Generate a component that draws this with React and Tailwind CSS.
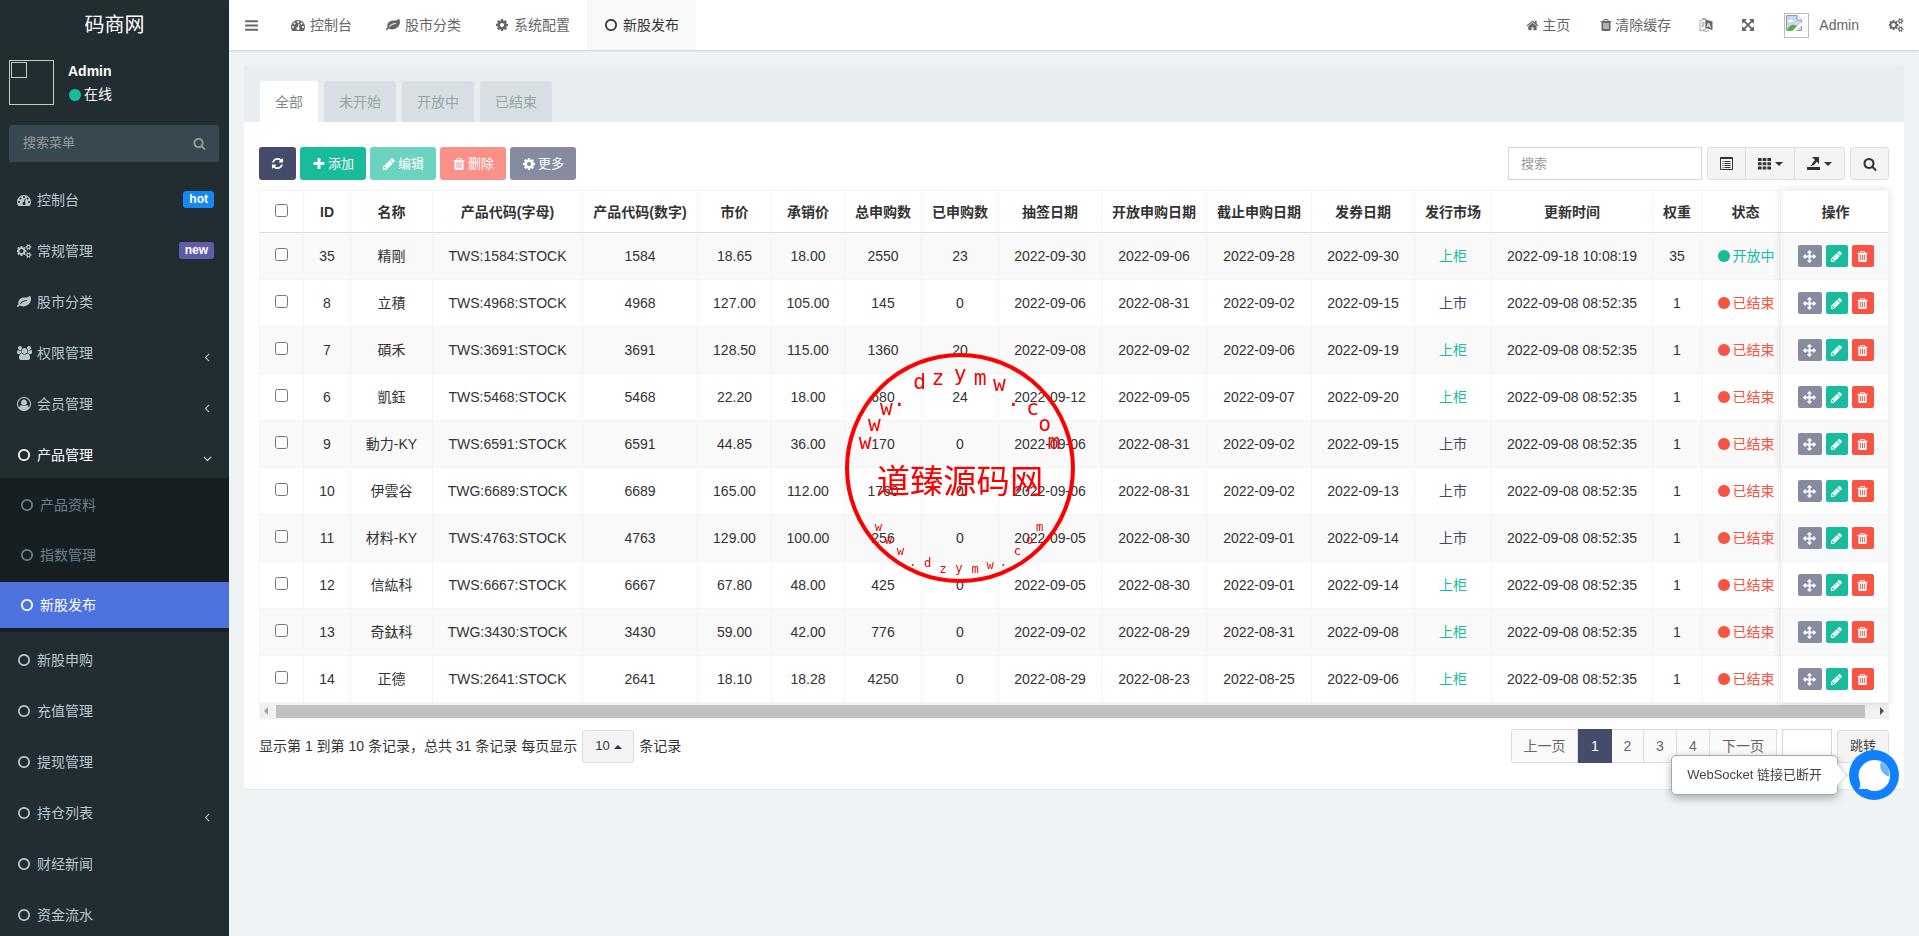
import clsx from 'clsx'

// [path, width], every glyph is 1792 units high
const ICONS = {
  dashboard: ['M384 1152q0-53-37.5-90.5t-90.5-37.5-90.5 37.5-37.5 90.5 37.5 90.5 90.5 37.5 90.5-37.5 37.5-90.5zm192-448q0-53-37.5-90.5t-90.5-37.5-90.5 37.5-37.5 90.5 37.5 90.5 90.5 37.5 90.5-37.5 37.5-90.5zm428 481l101-382q6-26-7.5-48.5t-38.5-29.5-48 6.5-30 39.5l-101 382q-60 5-107 43.5t-63 98.5q-20 77 20 146t117 89 146-20 89-117q16-60-6-117t-72-91zm660-33q0-53-37.5-90.5t-90.5-37.5-90.5 37.5-37.5 90.5 37.5 90.5 90.5 37.5 90.5-37.5 37.5-90.5zm-640-640q0-53-37.5-90.5t-90.5-37.5-90.5 37.5-37.5 90.5 37.5 90.5 90.5 37.5 90.5-37.5 37.5-90.5zm448 192q0-53-37.5-90.5t-90.5-37.5-90.5 37.5-37.5 90.5 37.5 90.5 90.5 37.5 90.5-37.5 37.5-90.5zm320 448q0 261-141 483-19 29-54 29h-1402q-35 0-54-29-141-221-141-483 0-182 71-348t191-286 286-191 348-71 348 71 286 191 191 286 71 348z', 1792],
  leaf: ['M1280 704q0-26-19-45t-45-19q-172 0-318 49.5t-259.5 134-235.5 219.5q-19 21-19 45 0 26 19 45t45 19q24 0 45-19 27-24 74-71t67-66q137-124 268.5-176t313.5-52q26 0 45-19t19-45zm512-198q0 95-20 193-46 224-184.5 383t-357.5 268q-214 108-438 108-148 0-286-47-15-5-88-42t-96-37q-16 0-39.5 32t-45 70-52.5 70-60 32q-43 0-63.5-17.5t-45.5-59.5q-2-4-6-11t-5.5-10-3-9.5-1.5-13.5q0-35 31-73.5t68-65.5 68-56 31-48q0-4-14-38t-16-44q-9-51-9-104 0-115 43.5-220t119-184.5 170.5-139 204-95.5q55-18 145-25.5t179.5-9 178.5-6 163.5-24 113.5-56.5l29.5-29.5 29.5-28 27-20 36.5-16 43.5-4.5q39 0 70.5 46t47.5 112 24 124 8 96z', 1792],
  cog: ['M1152 896q0-106-75-181t-181-75-181 75-75 181 75 181 181 75 181-75 75-181zm512-109v222q0 12-8 23t-20 13l-185 28q-19 54-39 91 35 50 107 138 10 12 10 25t-9 23q-27 37-99 108t-94 71q-12 0-26-9l-138-108q-44 23-91 38-16 136-29 186-7 28-36 28h-222q-14 0-24.5-8.5t-11.5-21.5l-28-184q-49-16-90-37l-141 107q-10 9-25 9-14 0-25-11-126-114-165-168-7-10-7-23 0-12 8-23 15-21 51-66.5t54-70.5q-27-50-41-99l-183-27q-13-2-21-12.5t-8-23.5v-222q0-12 8-23t19-13l186-28q14-46 39-92-40-57-107-138-10-12-10-24 0-10 9-23 26-36 98.5-107.5t94.5-71.5q13 0 26 10l138 107q44-23 91-38 16-136 29-186 7-28 36-28h222q14 0 24.5 8.5t11.5 21.5l28 184q49 16 90 37l142-107q9-9 24-9 13 0 25 10 129 119 165 170 7 8 7 22 0 12-8 23-15 21-51 66.5t-54 70.5q26 50 41 98l183 28q13 2 21 12.5t8 23.5z', 1792],
  cogs: ['M832 896q0-106-75-181t-181-75-181 75-75 181 75 181 181 75 181-75 75-181zm768 512q0-52-38-90t-90-38-90 38-38 90q0 53 37.5 90.5t90.5 37.5 90.5-37.5 37.5-90.5zm0-1024q0-52-38-90t-90-38-90 38-38 90q0 53 37.5 90.5t90.5 37.5 90.5-37.5 37.5-90.5zm-384 421v185q0 10-7 19.5t-16 10.5l-155 24q-11 35-32 76 34 48 90 115 7 11 7 20 0 12-7 19-23 30-82.5 89.5t-78.5 59.5q-11 0-21-7l-115-90q-37 19-77 31-11 108-23 155-7 24-30 24h-186q-11 0-20-7.5t-10-17.5l-23-153q-34-10-75-31l-118 89q-7 7-20 7-11 0-21-8-144-133-144-160 0-9 7-19 10-14 41-53t47-61q-23-44-35-82l-152-24q-10-1-17-9.5t-7-19.5v-185q0-10 7-19.5t16-10.5l155-24q11-35 32-76-34-48-90-115-7-11-7-20 0-12 7-20 22-30 82-89t79-59q11 0 21 7l115 90q34-18 77-32 11-108 23-154 7-24 30-24h186q11 0 20 7.5t10 17.5l23 153q34 10 75 31l118-89q8-7 20-7 11 0 21 8 144 133 144 160 0 8-7 19-12 16-42 54t-45 60q23 48 34 82l152 23q10 2 17 10.5t7 19.5zm640 533v140q0 16-149 31-12 27-30 52 51 113 51 138 0 4-4 7-122 71-124 71-8 0-46-47t-52-68q-20 2-30 2t-30-2q-14 21-52 68t-46 47q-2 0-124-71-4-3-4-7 0-25 51-138-18-25-30-52-149-15-149-31v-140q0-16 149-31 13-29 30-52-51-113-51-138 0-4 4-7 4-2 35-20t59-34 30-16q8 0 46 46.5t52 67.5q20-2 30-2t30 2q51-71 92-112l6-2q4 0 124 70 4 3 4 7 0 25-51 138 17 23 30 52 149 15 149 31zm0-1024v140q0 16-149 31-12 27-30 52 51 113 51 138 0 4-4 7-122 71-124 71-8 0-46-47t-52-68q-20 2-30 2t-30-2q-14 21-52 68t-46 47q-2 0-124-71-4-3-4-7 0-25 51-138-18-25-30-52-149-15-149-31v-140q0-16 149-31 13-29 30-52-51-113-51-138 0-4 4-7 4-2 35-20t59-34 30-16q8 0 46 46.5t52 67.5q20-2 30-2t30 2q51-71 92-112l6-2q4 0 124 70 4 3 4 7 0 25-51 138 17 23 30 52 149 15 149 31z', 1920],
  group: ['M593 896q-162 5-265 128h-134q-82 0-138-40.5t-56-118.5q0-353 124-353 6 0 43.5 21t97.5 42.5 119 21.5q67 0 133-23-5 37-5 66 0 159 97 282zm1071 637q0 120-73 189.5t-194 69.5h-874q-121 0-194-69.5t-73-189.5q0-53 3.5-103.5t14-109 26.5-108.5 43-97.5 62-81 85.5-53.5 111.5-20q10 0 43 21.5t73 48 107 48 135 21.5 135-21.5 107-48 73-48 43-21.5q61 0 111.5 20t85.5 53.5 62 81 43 97.5 26.5 108.5 14 109 3.5 103.5zm-1024-1277q0 106-75 181t-181 75-181-75-75-181 75-181 181-75 181 75 75 181zm704 384q0 159-112.5 271.5t-271.5 112.5-271.5-112.5-112.5-271.5 112.5-271.5 271.5-112.5 271.5 112.5 112.5 271.5zm576 225q0 78-56 118.5t-138 40.5h-134q-103-123-265-128 97-123 97-282 0-29-5-66 66 23 133 23 59 0 119-21.5t97.5-42.5 43.5-21q124 0 124 353zm-128-609q0 106-75 181t-181 75-181-75-75-181 75-181 181-75 181 75 75 181z', 1920],
  user: ['M896 0q182 0 348 71t286 191 191 286 71 348q0 181-70.5 347t-190.5 286-286 191.5-349 71.5-349-71-285.5-191.5-190.5-286-71-347.5 71-348 191-286 286-191 348-71zm619 1351q149-205 149-455 0-156-61-298t-164-245-245-164-298-61-298 61-245 164-164 245-61 298q0 250 149 455 66-327 306-327 131 128 313 128t313-128q240 0 306 327zm-235-647q0-159-112.5-271.5t-271.5-112.5-271.5 112.5-112.5 271.5 112.5 271.5 271.5 112.5 271.5-112.5 112.5-271.5z', 1792],
  circleO: ['M896 352q-148 0-273 73t-198 198-73 273 73 273 198 198 273 73 273-73 198-198 73-273-73-273-198-198-273-73zm768 544q0 209-103 385.5t-279.5 279.5-385.5 103-385.5-103-279.5-279.5-103-385.5 103-385.5 279.5-279.5 385.5-103 385.5 103 279.5 279.5 103 385.5z', 1792],
  circle: ['M1664 896q0 209-103 385.5t-279.5 279.5-385.5 103-385.5-103-279.5-279.5-103-385.5 103-385.5 279.5-279.5 385.5-103 385.5 103 279.5 279.5 103 385.5z', 1792],
  search: ['M1216 832q0-185-131.5-316.5t-316.5-131.5-316.5 131.5-131.5 316.5 131.5 316.5 316.5 131.5 316.5-131.5 131.5-316.5zm512 832q0 52-38 90t-90 38q-54 0-90-38l-343-342q-179 124-399 124-143 0-273.5-55.5t-225-150-150-225-55.5-273.5 55.5-273.5 150-225 225-150 273.5-55.5 273.5 55.5 225 150 150 225 55.5 273.5q0 220-124 399l343 343q37 37 37 90z', 1792],
  refresh: ['M1639 1056q0 5-1 7-64 268-268 434.5t-478 166.5q-146 0-282.5-55t-243.5-157l-129 129q-19 19-45 19t-45-19-19-45v-448q0-26 19-45t45-19h448q26 0 45 19t19 45-19 45l-137 137q71 66 161 102t187 36q134 0 250-65t186-179q11-17 53-117 8-23 30-23h192q13 0 22.5 9.5t9.5 22.5zm25-800v448q0 26-19 45t-45 19h-448q-26 0-45-19t-19-45 19-45l138-138q-148-137-349-137-134 0-250 65t-186 179q-11 17-53 117-8 23-30 23h-199q-13 0-22.5-9.5t-9.5-22.5v-7q65-268 270-434.5t480-166.5q146 0 284 55.5t245 156.5l130-129q19-19 45-19t45 19 19 45z', 1792],
  plus: ['M1600 736v192q0 40-28 68t-68 28h-416v416q0 40-28 68t-68 28h-192q-40 0-68-28t-28-68v-416h-416q-40 0-68-28t-28-68v-192q0-40 28-68t68-28h416v-416q0-40 28-68t68-28h192q40 0 68 28t28 68v416h416q40 0 68 28t28 68z', 1792],
  pencil: ['M491 1536l91-91-235-235-91 91v107h128v128h107zm523-928q0-22-22-22-10 0-17 7l-542 542q-7 7-7 17 0 22 22 22 10 0 17-7l542-542q7-7 7-17zm-54-192l416 416-832 832h-416v-416zm683 96q0 53-37 90l-166 166-416-416 166-165q36-38 90-38 53 0 91 38l235 234q37 39 37 91z', 1792],
  trash: ['M704 1376v-704q0-14-9-23t-23-9h-64q-14 0-23 9t-9 23v704q0 14 9 23t23 9h64q14 0 23-9t9-23zm256 0v-704q0-14-9-23t-23-9h-64q-14 0-23 9t-9 23v704q0 14 9 23t23 9h64q14 0 23-9t9-23zm256 0v-704q0-14-9-23t-23-9h-64q-14 0-23 9t-9 23v704q0 14 9 23t23 9h64q14 0 23-9t9-23zm-544-992h448l-48-117q-7-9-17-11h-317q-10 2-17 11zm928 32v64q0 14-9 23t-23 9h-96v948q0 83-47 143.5t-113 60.5h-832q-66 0-113-58.5t-47-141.5v-952h-96q-14 0-23-9t-9-23v-64q0-14 9-23t23-9h309l70-167q15-37 54-63t79-26h320q40 0 79 26t54 63l70 167h309q14 0 23 9t9 23z', 1792],
  home: ['M1472 992v480q0 26-19 45t-45 19h-384v-384h-256v384h-384q-26 0-45-19t-19-45v-480q0-1 .5-3t.5-3l575-474 575 474q1 2 1 6zm223-69l-62 74q-8 9-21 11h-3q-13 0-21-7l-692-577-692 577q-12 8-24 7-13-2-21-11l-62-74q-8-10-7-23.5t11-21.5l719-599q32-26 76-26t76 26l244 204v-195q0-14 9-23t23-9h192q14 0 23 9t9 23v408l219 182q10 8 11 21.5t-7 23.5z', 1792],
  bars: ['M1664 1344v128q0 26-19 45t-45 19h-1408q-26 0-45-19t-19-45v-128q0-26 19-45t45-19h1408q26 0 45 19t19 45zm0-512v128q0 26-19 45t-45 19h-1408q-26 0-45-19t-19-45v-128q0-26 19-45t45-19h1408q26 0 45 19t19 45zm0-512v128q0 26-19 45t-45 19h-1408q-26 0-45-19t-19-45v-128q0-26 19-45t45-19h1408q26 0 45 19t19 45z', 1792],
  arrows: ['M1792 896q0 26-19 45l-256 256q-19 19-45 19t-45-19-19-45v-128h-384v384h128q26 0 45 19t19 45-19 45l-256 256q-19 19-45 19t-45-19l-256-256q-19-19-19-45t19-45 45-19h128v-384h-384v128q0 26-19 45t-45 19-45-19l-256-256q-19-19-19-45t19-45l256-256q19-19 45-19t45 19 19 45v128h384v-384h-128q-26 0-45-19t-19-45 19-45l256-256q19-19 45-19t45 19l256 256q19 19 19 45t-19 45-45 19h-128v384h384v-128q0-26 19-45t45-19 45 19l256 256q19 19 19 45z', 1792],
  expand: ['M1411 541l-355 355 355 355 144-144q29-31 70-14 39 17 39 59v448q0 26-19 45t-45 19h-448q-42 0-59-40-17-39 14-69l144-144-355-355-355 355 144 144q31 30 14 69-17 40-59 40h-448q-26 0-45-19t-19-45v-448q0-42 40-59 39-17 69 14l144 144 355-355-355-355-144 144q-19 19-45 19-12 0-24-5-40-17-40-59v-448q0-26 19-45t45-19h448q42 0 59 40 17 39-14 69l-144 144 355 355 355-355-144-144q-31-30-14-69 17-40 59-40h448q26 0 45 19t19 45v448q0 42-39 59-13 5-25 5-26 0-45-19z', 1792],
  angle: ['M1203 544q0 13-10 23l-393 393 393 393q10 10 10 23t-10 23l-50 50q-10 10-23 10t-23-10l-466-466q-10-10-10-23t10-23l466-466q10-10 23-10t23 10l50 50q10 10 10 23z', 1792],
}

function Icon({ name, className = 'h-[14px]' }) {
  const [d, width] = ICONS[name]
  return (
    <svg viewBox={`0 0 ${width} 1792`} className={clsx('w-auto shrink-0', className)} fill="currentColor" fillRule={name === 'user' ? 'evenodd' : 'nonzero'} aria-hidden="true">
      <path d={d} />
    </svg>
  )
}

const MENU = [
  { icon: 'dashboard', label: '控制台', badge: 'hot', badgeClass: 'bg-[#1688f1]' },
  { icon: 'cogs', label: '常规管理', badge: 'new', badgeClass: 'bg-[#605ca8]' },
  { icon: 'leaf', label: '股市分类' },
  { icon: 'group', label: '权限管理', arrow: true },
  { icon: 'user', label: '会员管理', arrow: true },
  { icon: 'circleO', label: '产品管理', arrow: true, children: ['产品资料', '指数管理', '新股发布'] },
  { icon: 'circleO', label: '新股申购' },
  { icon: 'circleO', label: '充值管理' },
  { icon: 'circleO', label: '提现管理' },
  { icon: 'circleO', label: '持仓列表', arrow: true },
  { icon: 'circleO', label: '财经新闻' },
  { icon: 'circleO', label: '资金流水' },
]

const TOP_TABS = [
  { icon: 'dashboard', label: '控制台' },
  { icon: 'leaf', label: '股市分类' },
  { icon: 'cog', label: '系统配置' },
  { icon: 'circleO', label: '新股发布', active: true },
]

const COLUMNS = [
  ['ID', 'w-[47px]'],
  ['名称', 'w-[82px]'],
  ['产品代码(字母)', 'w-[150px]'],
  ['产品代码(数字)', 'w-[115px]'],
  ['市价', 'w-[74px]'],
  ['承销价', 'w-[73px]'],
  ['总申购数', 'w-[77px]'],
  ['已申购数', 'w-[77px]'],
  ['抽签日期', 'w-[103px]'],
  ['开放申购日期', 'w-[105px]'],
  ['截止申购日期', 'w-[105px]'],
  ['发券日期', 'w-[103px]'],
  ['发行市场', 'w-[77px]'],
  ['更新时间', 'w-[161px]'],
  ['权重', 'w-[49px]'],
  ['状态', 'w-[88px]'],
]

const ROWS = [
  ['35', '精剛', 'TWS:1584:STOCK', '1584', '18.65', '18.00', '2550', '23', '2022-09-30', '2022-09-06', '2022-09-28', '2022-09-30', '上柜', '2022-09-18 10:08:19', '35', '开放中'],
  ['8', '立積', 'TWS:4968:STOCK', '4968', '127.00', '105.00', '145', '0', '2022-09-06', '2022-08-31', '2022-09-02', '2022-09-15', '上市', '2022-09-08 08:52:35', '1', '已结束'],
  ['7', '碩禾', 'TWS:3691:STOCK', '3691', '128.50', '115.00', '1360', '20', '2022-09-08', '2022-09-02', '2022-09-06', '2022-09-19', '上柜', '2022-09-08 08:52:35', '1', '已结束'],
  ['6', '凱鈺', 'TWS:5468:STOCK', '5468', '22.20', '18.00', '680', '24', '2022-09-12', '2022-09-05', '2022-09-07', '2022-09-20', '上柜', '2022-09-08 08:52:35', '1', '已结束'],
  ['9', '動力-KY', 'TWS:6591:STOCK', '6591', '44.85', '36.00', '170', '0', '2022-09-06', '2022-08-31', '2022-09-02', '2022-09-15', '上市', '2022-09-08 08:52:35', '1', '已结束'],
  ['10', '伊雲谷', 'TWG:6689:STOCK', '6689', '165.00', '112.00', '1760', '0', '2022-09-06', '2022-08-31', '2022-09-02', '2022-09-13', '上市', '2022-09-08 08:52:35', '1', '已结束'],
  ['11', '材料-KY', 'TWS:4763:STOCK', '4763', '129.00', '100.00', '256', '0', '2022-09-05', '2022-08-30', '2022-09-01', '2022-09-14', '上市', '2022-09-08 08:52:35', '1', '已结束'],
  ['12', '信紘科', 'TWS:6667:STOCK', '6667', '67.80', '48.00', '425', '0', '2022-09-05', '2022-08-30', '2022-09-01', '2022-09-14', '上柜', '2022-09-08 08:52:35', '1', '已结束'],
  ['13', '奇鈦科', 'TWG:3430:STOCK', '3430', '59.00', '42.00', '776', '0', '2022-09-02', '2022-08-29', '2022-08-31', '2022-09-08', '上柜', '2022-09-08 08:52:35', '1', '已结束'],
  ['14', '正德', 'TWS:2641:STOCK', '2641', '18.10', '18.28', '4250', '0', '2022-08-29', '2022-08-23', '2022-08-25', '2022-09-06', '上柜', '2022-09-08 08:52:35', '1', '已结束'],
]

function Sidebar() {
  return (
    <aside className="w-[229px] shrink-0 overflow-hidden bg-[#222d32] text-sm text-[#b8c7ce]">
      <a href="#" className="flex h-[50px] items-center justify-center text-xl text-white">码商网</a>
      <div className="flex gap-[14px] px-[9px] pt-[10px] text-white">
        <div className="h-[45px] w-[45px] border border-[#c4c8ca] p-px">
          <div className="h-4 w-4 border border-[#c4c8ca]" />
        </div>
        <div className="leading-[23px]">
          <p className="font-bold">Admin</p>
          <a href="#" className="flex items-center gap-[2px]">
            <Icon name="circle" className="h-[14px] text-[#18bc9c]" />
            在线
          </a>
        </div>
      </div>
      <form className="mx-[9px] mt-[19px] flex h-[37px] w-[210px] items-center rounded-[3px] bg-[#374850]">
        <input aria-label="搜索菜单" placeholder="搜索菜单" className="min-w-0 flex-1 bg-transparent px-[14px] text-[13px] outline-none placeholder:text-[#999]" />
        <button type="button" aria-label="搜索" className="px-[13px] text-[#999]"><Icon name="search" className="h-[13px]" /></button>
      </form>
      <ul className="mt-[10px]">
        {MENU.map((item) => (
          <li key={item.label} className="pt-1">
            <a href="#" className={clsx('flex h-[47px] items-center pr-[15px] pl-4', item.children && 'text-white')}>
              <span className="mr-[5px] flex w-4 justify-center"><Icon name={item.icon} /></span>
              {item.label}
              {item.badge ? (
                <span className={clsx('ml-auto rounded-[3px] px-[6px] text-xs leading-[17px] font-bold text-white', item.badgeClass)}>{item.badge}</span>
              ) : null}
              {item.arrow ? <Icon name="angle" className={clsx('mt-2 ml-auto h-[14px]', item.children && '-rotate-90')} /> : null}
            </a>
            {item.children ? (
              <ul className="bg-[#181f23] pt-1">
                {item.children.map((label) => (
                  <li key={label} className="pb-1">
                    <a href="#" className={clsx('flex h-[46px] items-center pl-5', label === '新股发布' ? 'bg-[#4e73df] text-white' : 'text-[#67818d]')}>
                      <Icon name="circleO" className="mr-[6px] h-[14px]" />
                      {label}
                    </a>
                  </li>
                ))}
              </ul>
            ) : null}
          </li>
        ))}
      </ul>
    </aside>
  )
}

function LanguageIcon() {
  return (
    <svg viewBox="0 0 14 14" className="h-[14px] w-[14px]" aria-hidden="true">
      <path d="M1 2.5 7 1v10L1 13z" fill="#fff" stroke="#aaa" />
      <path d="M2.5 5h3M4 4v1M5 5.5 2.5 9M3 7l2.5 2" stroke="#888" strokeWidth=".8" fill="none" />
      <path d="M6.5 1.5 13.5 3.5V12l-7-2z" fill="#666" />
      <path d="m8 9 1.6-4 1.9 5M8.5 7.500l2.4.6" stroke="#fff" fill="none" />
      <path d="M4 12.500c2 1 4 1 6 0M3 .8l3-.3" stroke="#999" fill="none" />
    </svg>
  )
}

function BrokenImage() {
  return (
    <svg viewBox="0 0 16 16" className="h-4 w-4" aria-hidden="true">
      <path d="M.5.5h10.500l4.500 4.500v10.500H.5z" fill="#c6d8f7" stroke="#999" />
      <path d="M11 .5V5h4.500" fill="#fff" stroke="#999" />
      <path d="M2 7q0-2 2-2 2-1.500 3 1l1 1z" fill="#fff" />
      <path d="M1 15q3-6 8-5l2 1-4 4z" fill="#5aac3b" />
      <path d="M6.500 16 16 7v3l-6 6z" fill="#fff" />
    </svg>
  )
}

function Header() {
  return (
    <header className="relative z-10 flex h-[50px] shrink-0 items-stretch bg-white text-sm text-[#666] shadow-[0_1px_2px_rgba(0,0,0,0.15)]">
      <button type="button" aria-label="切换菜单" className="w-[45px] pl-[15px]"><Icon name="bars" className="h-[15px]" /></button>
      <nav className="flex">
        {TOP_TABS.map((tab) => (
          <a key={tab.label} href="#" className={clsx('flex items-center gap-1 border-r border-transparent px-4', tab.active && 'bg-[#f9f9f9] text-[#333]')}>
            <span className="flex w-4 justify-center"><Icon name={tab.icon} /></span>
            {tab.label}
          </a>
        ))}
      </nav>
      <nav className="ml-auto flex">
        <a href="#" className="flex items-center gap-[3px] px-[15px]"><Icon name="home" className="h-[13px]" />主页</a>
        <a href="#" className="flex items-center gap-[2px] px-[14px]"><Icon name="trash" />清除缓存</a>
        <a href="#" aria-label="语言" className="flex items-center px-[14px]"><LanguageIcon /></a>
        <a href="#" aria-label="全屏" className="flex items-center px-[14px]"><Icon name="expand" /></a>
        <a href="#" className="flex items-center gap-[10px] px-[15px]">
          <span className="h-[25px] w-[25px] border border-[#bbb] p-px"><BrokenImage /></span>
          Admin
        </a>
        <a href="#" aria-label="设置" className="flex items-center px-[15px]"><Icon name="cogs" /></a>
      </nav>
    </header>
  )
}

function Caret({ className }) {
  return (
    <svg viewBox="0 0 8 4" className={clsx('h-1 w-2', className)} fill="currentColor" aria-hidden="true">
      <path d="M0 0h8L4 4z" />
    </svg>
  )
}

function Toolbar() {
  const btn = 'flex h-[33px] items-center gap-[2px] rounded-[3px] px-3 text-[13px] text-white'
  const tool = 'flex items-center justify-center gap-1 border-[#ddd] text-[#333]'
  return (
    <div className="flex items-center gap-1">
      <button type="button" aria-label="刷新" className={clsx(btn, 'bg-[#444c69]')}><Icon name="refresh" className="h-[13px]" /></button>
      <button type="button" className={clsx(btn, 'bg-[#18bc9c]')}><Icon name="plus" />添加</button>
      <button type="button" className={clsx(btn, 'bg-[#6bd3bf]')}><Icon name="pencil" />编辑</button>
      <button type="button" className={clsx(btn, 'bg-[#fa9188]')}><Icon name="trash" />删除</button>
      <button type="button" className={clsx(btn, 'bg-[#868ba0]')}><Icon name="cog" />更多</button>
      <input aria-label="搜索" placeholder="搜索" className="ml-auto h-[33px] w-[194px] border border-[#d2d6de] px-3 text-[13px] outline-none placeholder:text-[#999]" />
      <div className="ml-px flex h-[33px] rounded-[3px] border border-[#ddd] bg-[#f4f4f4]">
        <button type="button" aria-label="切换视图" className={clsx(tool, 'w-[38px] border-r')}>
          <svg viewBox="0 0 13 13" className="h-[13px] w-[13px]" fill="none" stroke="currentColor" aria-hidden="true">
            <path d="M.5.5h12v12H.5zM.5 1.500h12" />
            <path d="M2.500 4.500h1m1 0h6m-8 2h1m1 0h6m-8 2h1m1 0h6m-8 2h1m1 0h6" />
          </svg>
        </button>
        <button type="button" aria-label="列" className={clsx(tool, 'w-[49px] border-r')}>
          <svg viewBox="0 0 13 13" className="h-[13px] w-[13px]" fill="currentColor" aria-hidden="true">
            <path d="M0 1h3.600v3H0zM4.700 1h3.600v3H4.700zM9.400 1H13v3H9.400zM0 5.200h3.600v3H0zM4.700 5.200h3.600v3H4.700zM9.400 5.200H13v3H9.400zM0 9.400h3.600v3H0zM4.700 9.400h3.600v3H4.700zM9.400 9.400H13v3H9.400z" />
          </svg>
          <Caret />
        </button>
        <button type="button" aria-label="导出" className={clsx(tool, 'w-[49px]')}>
          <svg viewBox="0 0 13 13" className="h-[13px] w-[13px]" fill="currentColor" aria-hidden="true">
            <path d="M0 10h13v3H0zM5 0h7v7L9.800 4.800 7 8q-2 1-4 1 2-1 2.500-3L8 3z" />
          </svg>
          <Caret />
        </button>
      </div>
      <button type="button" aria-label="高级搜索" className="ml-px flex h-[33px] w-[39px] items-center justify-center rounded-[3px] border border-[#ddd] bg-[#f4f4f4] text-[#333]">
        <Icon name="search" />
      </button>
    </div>
  )
}

function cellContent(value, index) {
  if (index === 12) return <a href="#" className={value === '上柜' ? 'text-[#18bc9c]' : 'text-[#444c69]'}>{value}</a>
  if (index === 15) {
    return (
      <a href="#" className={clsx('flex items-center justify-center gap-[2px]', value === '开放中' ? 'text-[#18bc9c]' : 'text-[#f75444]')}>
        <Icon name="circle" />
        {value}
      </a>
    )
  }
  return value
}

function StockTable() {
  const cell = 'border-r border-b border-[#f4f4f4] p-0'
  const head = 'h-[43px] border-t border-r border-b border-[#f4f4f4] border-b-[#ddd] p-0 font-bold'
  return (
    <div className="relative mt-[10px]">
      <div className="overflow-hidden">
        <table className="w-full min-w-[1637px] table-fixed border-separate border-spacing-0 border-l border-[#f4f4f4] text-center text-sm whitespace-nowrap text-[#333]">
          <thead>
            <tr>
              <th className={clsx(head, 'w-[44px]')}><input type="checkbox" aria-label="全选" className="mb-[5px] align-middle" /></th>
              {COLUMNS.map(([label, width]) => <th key={label} className={clsx(head, width)}>{label}</th>)}
              <th className={clsx(head, 'sticky right-0 w-[107px] border-l bg-white')}>操作</th>
            </tr>
          </thead>
          <tbody>
            {ROWS.map((row) => (
              <tr key={row[0]} className="h-[47px] bg-white odd:bg-[#f9f9f9]">
                <td className={cell}><input type="checkbox" aria-label={row[1]} className="mb-[5px] align-middle" /></td>
                {row.map((value, i) => <td key={i} className={cell}>{cellContent(value, i)}</td>)}
                <td className={clsx(cell, 'sticky right-0 border-l bg-inherit')}>
                  <div className="flex justify-center gap-1 text-white">
                    <button type="button" aria-label="排序" className="flex h-[22px] w-6 items-center justify-center rounded-[2px] bg-[#868ba0]"><Icon name="arrows" className="h-[13px]" /></button>
                    <button type="button" aria-label="编辑" className="flex h-[22px] w-[22px] items-center justify-center rounded-[2px] bg-[#18bc9c]"><Icon name="pencil" className="h-[13px]" /></button>
                    <button type="button" aria-label="删除" className="flex h-[22px] w-[22px] items-center justify-center rounded-[2px] bg-[#f75444]"><Icon name="trash" className="h-[13px]" /></button>
                  </div>
                </td>
              </tr>
            ))}
          </tbody>
        </table>
        <div className="flex h-4 items-center justify-between bg-[#f1f1f1] px-[5px]">
          <svg viewBox="0 0 4 8" className="h-2 w-1" aria-hidden="true"><path d="M4 0v8L0 4z" fill="#a3a3a3" /></svg>
          <div className="mr-[15px] ml-2 h-[13px] flex-1 bg-[#c1c1c1]" />
          <svg viewBox="0 0 4 8" className="h-2 w-1" aria-hidden="true"><path d="M0 0v8l4-4z" fill="#505050" /></svg>
        </div>
      </div>
      {/* shadow round the pinned column */}
      <div className="pointer-events-none absolute top-0 right-0 bottom-4 w-[108px] shadow-[0_0_8px_rgba(0,0,0,0.12)]" />
    </div>
  )
}

function Pagination() {
  const page = 'flex items-center justify-center border-r border-[#ddd] bg-[#fafafa] text-[#666]'
  return (
    <div className="mt-[10px] flex items-center text-sm text-[#333]">
      <span>显示第 1 到第 10 条记录，总共 31 条记录 每页显示</span>
      <span className="relative mx-[5px]">
        <select aria-label="每页显示" className="block h-[33px] w-[52px] appearance-none rounded-[3px] border border-[#ddd] bg-[#f4f4f4] px-3 text-[13px]">
          <option>10</option>
          <option>25</option>
          <option>50</option>
        </select>
        <Caret className="pointer-events-none absolute top-[15px] right-3 rotate-180" />
      </span>
      <span>条记录</span>
      <nav aria-label="分页" className="ml-auto flex h-[34px] rounded-l-[3px] border border-r-0 border-[#ddd]">
        <a href="#" className={clsx(page, 'w-[66px]')}>上一页</a>
        <a href="#" className="-my-px flex w-[34px] items-center justify-center bg-[#444c69] text-white">1</a>
        <a href="#" className={clsx(page, 'w-8')}>2</a>
        <a href="#" className={clsx(page, 'w-[33px]')}>3</a>
        <a href="#" className={clsx(page, 'w-[33px]')}>4</a>
        <a href="#" className={clsx(page, 'w-[67px]')}>下一页</a>
      </nav>
      <input aria-label="页码" className="ml-[5px] h-[34px] w-[50px] border border-[#d2d6de] text-center outline-none" />
      <button type="button" className="ml-[5px] h-[33px] w-[52px] rounded-[3px] border border-[#ddd] bg-[#f4f4f4] text-[13px] text-[#444]">跳转</button>
    </div>
  )
}

const STAMP_TOP = [
  ['w', 20, 95], ['w', 29, 77], ['w', 41, 61], ['.', 54, 53], ['d', 74, 36], ['z', 92, 32], ['y', 114, 28],
  ['m', 134, 32], ['w', 153, 38], ['.', 167, 53], ['c', 186, 61], ['o', 198, 77], ['m', 207, 95],
]
const STAMP_BOTTOM = [
  ['w', 33, 176], ['w', 43, 189], ['w', 55, 200], ['.', 67, 211], ['d', 82, 212], ['z', 97, 218], ['y', 113, 217],
  ['m', 129, 218], ['w', 144, 214], ['.', 157, 211], ['c', 171, 200], ['o', 183, 189], ['m', 193, 176],
]

function Stamp() {
  return (
    <svg viewBox="0 0 228 228" className="pointer-events-none fixed top-1/2 left-1/2 z-20 h-[230px] w-[230px] -translate-x-1/2 -translate-y-1/2 font-['DejaVu_Sans_Mono','Noto_Sans_CJK_SC',monospace]" fill="#f00" textAnchor="middle">
      <circle cx="114" cy="114" r="112" fill="none" stroke="#f00" strokeWidth="4" />
      {STAMP_TOP.map(([c, x, y]) => <text key={x} x={x} y={y} className="text-[21px]">{c}</text>)}
      <text x="114" y="139" className="text-[33px]">道臻源码网</text>
      {STAMP_BOTTOM.map(([c, x, y]) => <text key={x} x={x} y={y} className="text-xs">{c}</text>)}
    </svg>
  )
}

function ChatWidget() {
  return (
    <div className="absolute top-[750px] right-5 z-20 flex items-center gap-[11px]">
      <div role="status" className="relative flex h-10 items-center rounded-[5px] border border-[#aaa] bg-white px-[15px] text-[13px] text-[#444] shadow-[0_3px_8px_rgba(0,0,0,0.3)]">
        WebSocket 链接已断开
        <svg viewBox="0 0 11 22" className="absolute top-2 -right-[11px] h-[22px] w-[11px]" aria-hidden="true">
          <path d="M0 0 10 11 0 22z" fill="#fff" />
          <path d="M.5.500 10 11 .5 21.500" fill="none" stroke="#ccc" />
        </svg>
      </div>
      <button type="button" aria-label="客服" className="h-[50px] w-[50px]">
        <svg viewBox="0 0 50 50" className="h-[50px] w-[50px]">
          <circle cx="25" cy="25" r="25" fill="#1080ff" />
          <path d="M25 10a15.500 15.500 0 1 1-7 29q-4 0-8 0 2-3 1-7A15.500 15.500 0 0 1 25 10z" fill="#fff" />
          <path d="M32 11.500a15.500 15.500 0 0 1 8.500 15A11 11 0 0 1 32 11.500z" fill="#70b3ff" />
        </svg>
      </button>
    </div>
  )
}

export default function App() {
  return (
    <div className="relative flex h-screen overflow-hidden bg-[#eff3f6] font-['Liberation_Sans','Noto_Sans_CJK_SC',sans-serif]">
      <Sidebar />
      <div className="flex min-w-0 flex-1 flex-col">
        <Header />
        <main className="p-[15px]">
          <section className="rounded-[3px] bg-white shadow-[0_1px_1px_rgba(0,0,0,0.05)]">
            <div className="flex gap-[6px] rounded-t-[3px] bg-[#e8edf0] px-4 pt-4 text-sm">
              {['全部', '未开始', '开放中', '已结束'].map((label, i) => (
                <a key={label} href="#" className={clsx('flex h-[41px] items-center rounded-t-[3px] px-[15px]', i === 0 ? 'bg-white text-[#7b8a8b]' : 'bg-[#d8dfe4] text-[#95a5a6]')}>
                  {label}
                </a>
              ))}
            </div>
            <div className="px-[15px] pt-[25px] pb-[26px]">
              <Toolbar />
              <StockTable />
              <Pagination />
            </div>
          </section>
        </main>
      </div>
      <Stamp />
      <ChatWidget />
    </div>
  )
}
